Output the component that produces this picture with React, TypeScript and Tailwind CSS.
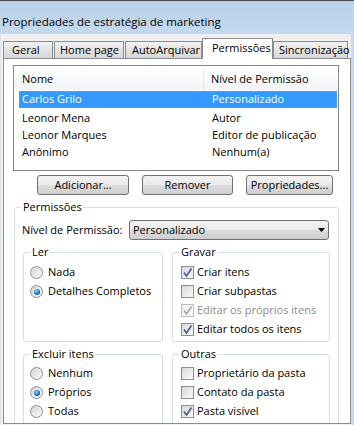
import React from 'react';

const btnGrad =
  'bg-[linear-gradient(to_bottom,#f2f2f2_0%,#ebebeb_48%,#dddddd_52%,#cfcfcf_100%)]';

const rows = [
  { name: 'Carlos Grilo', level: 'Personalizado', selected: true },
  { name: 'Leonor Mena', level: 'Autor' },
  { name: 'Leonor Marques', level: 'Editor de publicação' },
  { name: 'Anônimo', level: 'Nenhum(a)' },
];

function Radio({ checked }: { checked?: boolean }) {
  return (
    <span className="flex h-[13px] w-[13px] shrink-0 items-center justify-center rounded-full border border-[#8e8f8f] bg-[linear-gradient(135deg,#d4d4d4,#fbfbfb)]">
      {checked && (
        <span className="h-[6px] w-[6px] rounded-full bg-[radial-gradient(circle_at_40%_35%,#8ee0ff,#1b6cc4_55%,#0a3e84)]" />
      )}
    </span>
  );
}

function Check({ checked, disabled }: { checked?: boolean; disabled?: boolean }) {
  return (
    <span
      className={
        disabled
          ? 'flex h-[13px] w-[13px] shrink-0 items-center justify-center border border-[#bcbcbc] bg-[linear-gradient(135deg,#ececec,#fdfdfd)]'
          : 'flex h-[13px] w-[13px] shrink-0 items-center justify-center border border-[#8e8f8f] bg-[linear-gradient(135deg,#d8d8d8,#fbfbfb)]'
      }
    >
      {checked && (
        <svg width="11" height="11" viewBox="0 0 11 11">
          <path
            d="M2 5.5 L4.5 9 L9.5 1.5"
            fill="none"
            stroke={disabled ? '#a9a9a9' : '#4a5f9c'}
            strokeWidth="1.7"
          />
        </svg>
      )}
    </span>
  );
}

function Group({
  label,
  className,
  children,
}: {
  label: string;
  className?: string;
  children: React.ReactNode;
}) {
  return (
    <fieldset className={`rounded-[3px] border border-[#d5dfe5] ${className ?? ''}`}>
      <legend className="ml-[6px] px-[2px] leading-[16px]">{label}</legend>
      {children}
    </fieldset>
  );
}

function RadioRow({ label, checked }: { label: string; checked?: boolean }) {
  return (
    <div className="flex h-[19px] items-center gap-[5px]">
      <Radio checked={checked} />
      <span>{label}</span>
    </div>
  );
}

function CheckRow({ label, checked, disabled }: { label: string; checked?: boolean; disabled?: boolean }) {
  return (
    <div className="flex h-[19px] items-center gap-[3px]">
      <Check checked={checked} disabled={disabled} />
      <span className={disabled ? 'text-[#8d8d8d]' : ''}>{label}</span>
    </div>
  );
}

const tabs = [
  { label: 'Geral', cls: 'w-[50px] pl-[8px]' },
  { label: 'Home page', cls: 'ml-[1px] w-[70px] pl-[5px]' },
  { label: 'AutoArquivar', cls: 'ml-[1px] w-[77px] pl-[6px]' },
  { label: 'Permissões', cls: 'w-[71px] pl-[9px]', active: true },
  { label: 'Sincronização', cls: 'w-[75px] pl-[5px]' },
];

export default function App() {
  return (
    <div className="flex h-[425px] w-[354px] flex-col overflow-hidden border-t border-[#4a4a4a] bg-[#c6daef] font-['Open_Sans',sans-serif] text-[11px] text-black">
      <div className="flex h-[33px] shrink-0 items-center bg-[linear-gradient(to_bottom,#b8d0ea,#c4d9ee)] pl-[2px] pt-[8px] text-[11.5px]">
        Propriedades de estratégia de marketing
      </div>

      <div className="flex min-h-0 w-[351px] flex-1 flex-col border-l border-[#dfe3e8] bg-[#f0f0f0] pb-[1px]">
        <div className="flex h-[24px] shrink-0 items-end pl-[2px] pt-[4px]">
          {tabs.map(t =>
            t.active ? (
              <div
                key={t.label}
                className={`relative z-10 -mb-[1px] h-[21px] border border-b-0 border-[#898c95] bg-white pt-[1px] ${t.cls}`}
              >
                {t.label}
              </div>
            ) : (
              <div
                key={t.label}
                className={`flex h-[17px] items-center border border-b-0 border-[#898c95] bg-[linear-gradient(to_bottom,#f3f3f3,#e3e3e3_50%,#d9d9d9)] ${t.cls}`}
              >
                {t.label}
              </div>
            ),
          )}
        </div>

        <div className="ml-[2px] min-h-0 flex-1 overflow-hidden border border-[#898c95] bg-white pl-[9px] pt-[6px]">
          <div className="h-[106px] w-[326px] border border-[#828790] bg-white">
            <div className="flex h-[24px] items-center bg-[linear-gradient(to_bottom,#ffffff,#f3f4f6)] pt-[3px]">
              <div className="flex h-full w-[190px] items-center border-r border-[#e4e6e9] pl-[8px]">Nome</div>
              <div className="pl-[7px]">Nível de Permissão</div>
            </div>
            <div className="mt-[1px]">
              {rows.map(r => (
                <div
                  key={r.name}
                  className={
                    r.selected
                      ? 'mb-[2px] ml-[5px] mr-[1px] flex h-[17px] items-center border border-dotted border-[#d0883a] bg-[#3399ff] text-white'
                      : 'ml-[5px] mr-[1px] flex h-[17px] items-center border border-transparent'
                  }
                >
                  <div className="w-[192px] pl-[2px]">{r.name}</div>
                  <div>{r.level}</div>
                </div>
              ))}
            </div>
          </div>

          <div className="mt-[4px] flex pl-[24px]">
            <button className={`h-[20px] w-[92px] rounded-[3px] border border-[#707070] ${btnGrad}`}>Adicionar...</button>
            <button className={`ml-[13px] h-[20px] w-[91px] rounded-[3px] border border-[#707070] ${btnGrad}`}>Remover</button>
            <button className={`ml-[13px] h-[20px] w-[87px] rounded-[3px] border border-[#707070] ${btnGrad}`}>Propriedades...</button>
          </div>

          <Group label="Permissões" className="ml-[1px] mt-[4px] w-[325px] pb-[6px]">
            <div className="mt-[5px] flex h-[20px] items-center pl-[7px]">
              <span className="w-[107px]">Nível de Permissão:</span>
              <div className={`flex h-[20px] w-[200px] items-center justify-between rounded-[3px] border border-[#707070] pl-[3px] pr-[3px] ${btnGrad}`}>
                <span>Personalizado</span>
                <svg width="7" height="4" viewBox="0 0 7 4">
                  <path d="M0 0 H7 L3.5 4 Z" fill="#000" />
                </svg>
              </div>
            </div>

            <div className="ml-[8px] mt-[4px] flex">
              <Group label="Ler" className="w-[140px] pb-[2px]">
                <div className="mt-[3px] pl-[6px]">
                  <RadioRow label="Nada" />
                  <RadioRow label="Detalhes Completos" checked />
                </div>
              </Group>
              <Group label="Gravar" className="ml-[9px] w-[158px] pb-[2px]">
                <div className="mt-[3px] pl-[8px]">
                  <CheckRow label="Criar itens" checked />
                  <CheckRow label="Criar subpastas" />
                  <CheckRow label="Editar os próprios itens" checked disabled />
                  <CheckRow label="Editar todos os itens" checked />
                </div>
              </Group>
            </div>

            <div className="ml-[8px] mt-[4px] flex">
              <Group label="Excluir itens" className="w-[140px] pb-[6px]">
                <div className="mt-[2px] pl-[6px]">
                  <RadioRow label="Nenhum" />
                  <RadioRow label="Próprios" checked />
                  <RadioRow label="Todas" />
                </div>
              </Group>
              <Group label="Outras" className="ml-[9px] w-[158px] pb-[6px]">
                <div className="mt-[2px] pl-[8px]">
                  <CheckRow label="Proprietário da pasta" />
                  <CheckRow label="Contato da pasta" />
                  <CheckRow label="Pasta visível" checked />
                </div>
              </Group>
            </div>
          </Group>
        </div>
      </div>
    </div>
  );
}
